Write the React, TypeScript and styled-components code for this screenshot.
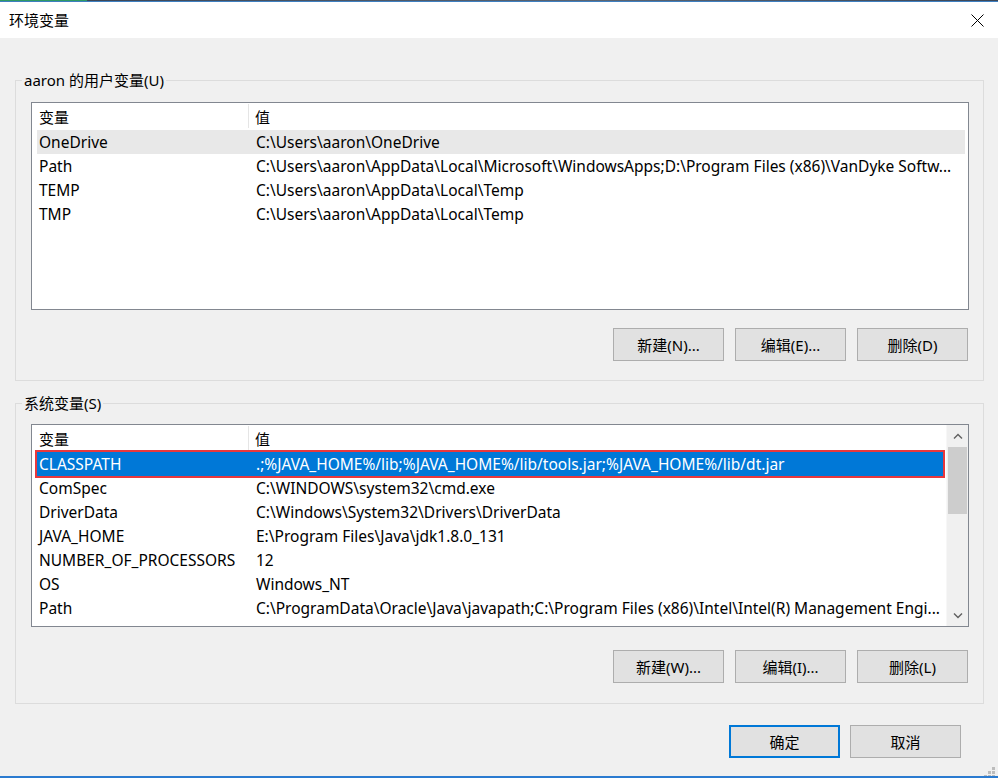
import React from "react";
import styled, { createGlobalStyle } from "styled-components";

const GlobalStyle = createGlobalStyle`
    html, body {
        margin: 0;
        padding: 0;
        background: #f0f0f0;
    }
    body {
        font-family: "Noto Sans", "Noto Sans CJK SC", sans-serif;
        font-size: 15px;
        color: #000;
    }
`;

const Window = styled.div`
    width: 998px;
    height: 778px;
    display: flex;
    flex-direction: column;
    box-sizing: border-box;
    border-bottom: 2px solid #2b7bd0;
    background: #f0f0f0;
    overflow: hidden;
`;

const TopStrip = styled.div`
    height: 1px;
    background: linear-gradient(to right, #2f9a63 0, #2f9a63 87px, #3c4656 87px, #5b6572 60%, #3c4656 100%);
    border-bottom: 1px solid #3e7fc0;
`;

const TitleBar = styled.div`
    height: 36px;
    background: #fff;
    display: flex;
    align-items: center;
    justify-content: space-between;
    padding: 0 14px 0 9px;
`;

const Title = styled.div`
    font-size: 15px;
    line-height: 20px;
`;

const CloseButton = styled.div`
    width: 14px;
    height: 14px;
    display: flex;
    align-items: center;
    justify-content: center;
`;

const Content = styled.div`
    flex: 1;
    position: relative;
    padding: 0 14px 0 15px;
`;

const Group = styled.fieldset<{ $top: number; $bottom: number }>`
    margin: ${(p) => p.$top}px 0 0 0;
    padding: 0 14px ${(p) => p.$bottom}px 15px;
    border: 1px solid #dcdcdc;
    min-width: 0;
`;

const Legend = styled.legend`
    padding: 0 2px;
    margin-left: -9px;
    font-size: 15px;
    line-height: 20px;
`;

const ListBox = styled.div<{ $height: number; $top: number }>`
    box-sizing: border-box;
    height: ${(p) => p.$height}px;
    margin-top: ${(p) => p.$top}px;
    border: 1px solid #828790;
    background: #fff;
    display: flex;
    overflow: hidden;
`;

const ListInner = styled.div`
    flex: 1;
    min-width: 0;
    overflow: hidden;
    font-size: 15.5px;
`;

const HeaderRow = styled.div`
    height: 27px;
    display: grid;
    grid-template-columns: 217px 1fr;
    align-items: stretch;
    font-size: 15px;
`;

const HeaderCell = styled.div<{ $divider?: boolean }>`
    display: flex;
    align-items: center;
    padding-left: ${(p) => (p.$divider ? "7px" : "6px")};
    border-right: ${(p) => (p.$divider ? "1px solid #e5e5e5" : "none")};
    margin: 1px 0 2px;
    white-space: nowrap;
`;

const Row = styled.div<{ $state?: "hover" | "selected" }>`
    height: 24px;
    line-height: 24px;
    margin: 0 3px 0 5px;
    display: grid;
    grid-template-columns: 213px 1fr;
    background: ${(p) => (p.$state === "selected" ? "#0078d7" : p.$state === "hover" ? "#e8e8e8" : "transparent")};
    color: ${(p) => (p.$state === "selected" ? "#fff" : "#000")};
    outline: ${(p) => (p.$state === "selected" ? "2px solid #e8383d" : "none")};
    outline-offset: 0;
`;

const Cell = styled.div<{ $second?: boolean }>`
    padding-left: ${(p) => (p.$second ? "6px" : "2px")};
    white-space: nowrap;
    overflow: hidden;
`;

const ScrollBar = styled.div`
    width: 21px;
    background: #f0f0f0;
    display: flex;
    flex-direction: column;
    border-left: 1px solid #f7f7f7;
`;

const ScrollArrow = styled.div`
    height: 21px;
    display: flex;
    align-items: center;
    justify-content: center;
`;

const ScrollTrack = styled.div`
    flex: 1;
    padding: 1px 1px 0 1px;
`;

const ScrollThumb = styled.div`
    height: 67px;
    background: #cdcdcd;
`;

const ButtonRow = styled.div<{ $top: number }>`
    display: flex;
    justify-content: flex-end;
    gap: 11px;
    margin-top: ${(p) => p.$top}px;
    padding-right: 1px;
`;

const Button = styled.button<{ $default?: boolean }>`
    width: 111px;
    height: 33px;
    box-sizing: border-box;
    background: #e1e1e1;
    border: ${(p) => (p.$default ? "2px solid #0078d7" : "1px solid #adadad")};
    font-family: "Noto Sans", "Noto Sans CJK SC", sans-serif;
    font-size: 15px;
    color: #000;
    padding: 0;
    display: flex;
    align-items: center;
    justify-content: center;
`;

const Footer = styled.div`
    display: flex;
    justify-content: flex-end;
    gap: 10px;
    margin-top: 21px;
    padding-right: 23px;
`;

const Grip = styled.div`
    position: absolute;
    right: 2px;
    bottom: 1px;
    width: 12px;
    height: 12px;
`;

type Variable = { name: string; value: string };

const userVars: Variable[] = [
    { name: "OneDrive", value: "C:\\Users\\aaron\\OneDrive" },
    {
        name: "Path",
        value: "C:\\Users\\aaron\\AppData\\Local\\Microsoft\\WindowsApps;D:\\Program Files (x86)\\VanDyke Softw...",
    },
    { name: "TEMP", value: "C:\\Users\\aaron\\AppData\\Local\\Temp" },
    { name: "TMP", value: "C:\\Users\\aaron\\AppData\\Local\\Temp" },
];

const systemVars: Variable[] = [
    { name: "CLASSPATH", value: ".;%JAVA_HOME%/lib;%JAVA_HOME%/lib/tools.jar;%JAVA_HOME%/lib/dt.jar" },
    { name: "ComSpec", value: "C:\\WINDOWS\\system32\\cmd.exe" },
    { name: "DriverData", value: "C:\\Windows\\System32\\Drivers\\DriverData" },
    { name: "JAVA_HOME", value: "E:\\Program Files\\Java\\jdk1.8.0_131" },
    { name: "NUMBER_OF_PROCESSORS", value: "12" },
    { name: "OS", value: "Windows_NT" },
    {
        name: "Path",
        value: "C:\\ProgramData\\Oracle\\Java\\javapath;C:\\Program Files (x86)\\Intel\\Intel(R) Management Engi...",
    },
    { name: "PATHEXT", value: ".COM;.EXE;.BAT;.CMD;.VBS;.VBE;.JS;.JSE;.WSF;.WSH;.MSC" },
];

const Chevron = ({ up }: { up?: boolean }) => (
    <svg width="10" height="6" viewBox="0 0 10 6">
        <polyline
            points={up ? "1,5.5 5,1.5 9,5.5" : "1,0.5 5,4.5 9,0.5"}
            fill="none"
            stroke="#606060"
            strokeWidth="1.4"
        />
    </svg>
);

interface VarListProps {
    items: Variable[];
    height: number;
    top: number;
    hovered?: number;
    selected?: number;
    scroll?: boolean;
}

const VarList = (props: VarListProps) => {
    const { items, height, top, hovered, selected, scroll } = props;
    return (
        <ListBox $height={height} $top={top}>
            <ListInner>
                <HeaderRow>
                    <HeaderCell $divider>变量</HeaderCell>
                    <HeaderCell>值</HeaderCell>
                </HeaderRow>
                {items.map((v, i) => (
                    <Row key={v.name + i} $state={i === selected ? "selected" : i === hovered ? "hover" : undefined}>
                        <Cell>{v.name}</Cell>
                        <Cell $second>{v.value}</Cell>
                    </Row>
                ))}
            </ListInner>
            {scroll && (
                <ScrollBar>
                    <ScrollArrow>
                        <Chevron up />
                    </ScrollArrow>
                    <ScrollTrack>
                        <ScrollThumb />
                    </ScrollTrack>
                    <ScrollArrow>
                        <Chevron />
                    </ScrollArrow>
                </ScrollBar>
            )}
        </ListBox>
    );
};

const App = () => {
    return (
        <Window>
            <GlobalStyle />
            <TopStrip />
            <TitleBar>
                <Title>环境变量</Title>
                <CloseButton>
                    <svg width="13" height="13" viewBox="0 0 13 13">
                        <path d="M0.5 0.5 L12.5 12.5 M12.5 0.5 L0.5 12.5" stroke="#000" strokeWidth="1" />
                    </svg>
                </CloseButton>
            </TitleBar>
            <Content>
                <Group $top={32} $bottom={19}>
                    <Legend>aaron 的用户变量(U)</Legend>
                    <VarList items={userVars} height={208} top={12} hovered={0} />
                    <ButtonRow $top={18}>
                        <Button>新建(N)...</Button>
                        <Button>编辑(E)...</Button>
                        <Button>删除(D)</Button>
                    </ButtonRow>
                </Group>
                <Group $top={12} $bottom={20}>
                    <Legend>系统变量(S)</Legend>
                    <VarList items={systemVars} height={203} top={11} selected={0} scroll />
                    <ButtonRow $top={23}>
                        <Button>新建(W)...</Button>
                        <Button>编辑(I)...</Button>
                        <Button>删除(L)</Button>
                    </ButtonRow>
                </Group>
                <Footer>
                    <Button $default>确定</Button>
                    <Button>取消</Button>
                </Footer>
                <Grip>
                    <svg width="12" height="12" viewBox="0 0 12 12">
                        {[
                            [8, 0],
                            [4, 4],
                            [8, 4],
                            [0, 8],
                            [4, 8],
                            [8, 8],
                        ].map(([x, y]) => (
                            <rect key={`${x}-${y}`} x={x} y={y} width="3" height="3" fill="#bcbcbc" />
                        ))}
                    </svg>
                </Grip>
            </Content>
        </Window>
    );
};

export default App;
